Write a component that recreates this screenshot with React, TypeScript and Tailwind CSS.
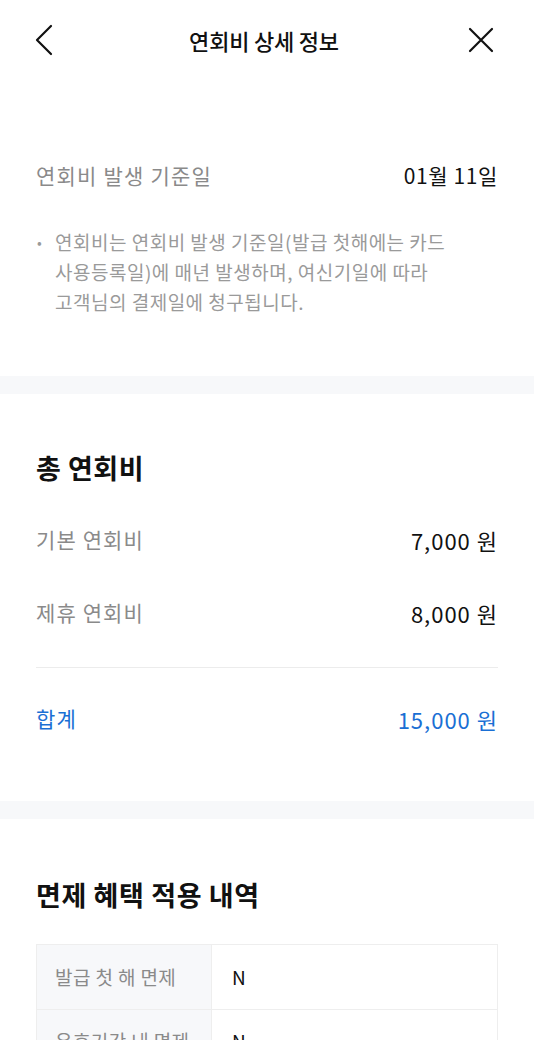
import React from 'react';

const rows = [
  { label: '기본 연회비', value: '7,000 원' },
  { label: '제휴 연회비', value: '8,000 원' },
];

const exemptions = [
  { label: '발급 첫 해 면제', value: 'N' },
  { label: '유효기간 내 면제', value: 'N' },
];

const App: React.FC = () => {
  return (
    <div
      className="w-[534px] min-h-screen bg-white text-[#111] overflow-hidden"
      style={{ fontFamily: '"Noto Sans CJK KR", "Noto Sans", sans-serif' }}
    >
      {/* Header */}
      <header className="h-20 flex items-center justify-between pl-[34px] pr-10">
        <button className="w-8 h-8 flex items-center">
          <svg width="20" height="32" viewBox="0 0 20 32" fill="none">
            <path d="M17 2 L3 16 L17 30" stroke="#111" strokeWidth="2.2" strokeLinecap="round" strokeLinejoin="round" />
          </svg>
        </button>
        <h1 className="text-[22px] font-medium tracking-[-0.2px]">연회비 상세 정보</h1>
        <button className="w-8 h-8 flex items-center justify-end">
          <svg width="26" height="26" viewBox="0 0 26 26" fill="none">
            <path d="M2 2 L24 24 M24 2 L2 24" stroke="#111" strokeWidth="2.2" strokeLinecap="round" />
          </svg>
        </button>
      </header>

      {/* Base date */}
      <section className="px-9 pt-[82px] pb-[59px]">
        <div className="flex items-center justify-between h-7">
          <span className="text-[21px] tracking-[1.2px] text-[#8a8a8a]">연회비 발생 기준일</span>
          <span className="text-[21px] tracking-[0.6px] text-[#111]">01월 11일</span>
        </div>
        <div className="mt-[37px] flex text-[19px] leading-[30px] tracking-[0.5px] text-[#9a9a9a]">
          <span className="w-[19px] shrink-0 text-[14px] pl-[1px]">•</span>
          <p>
            연회비는 연회비 발생 기준일(발급 첫해에는 카드
            <br />
            사용등록일)에 매년 발생하며, 여신기일에 따라
            <br />
            고객님의 결제일에 청구됩니다.
          </p>
        </div>
      </section>

      <div className="h-[18px] bg-[#f7f8fa]" />

      {/* Total fee */}
      <section className="px-9 pt-14 pb-[68px]">
        <h2 className="text-[27px] leading-9 font-bold tracking-[0.5px]">총 연회비</h2>
        {rows.map((r, i) => (
          <div
            key={r.label}
            className={`flex items-center justify-between h-7 ${i === 0 ? 'mt-10' : 'mt-[45px]'}`}
          >
            <span className="text-[21px] tracking-[1.1px] text-[#8a8a8a]">{r.label}</span>
            <span className="text-[22px] tracking-[1px] text-[#111]">{r.value}</span>
          </div>
        ))}
        <div className="mt-10 h-px bg-[#ececec]" />
        <div className="mt-[37px] flex items-center justify-between h-7 text-[#1a6fd4]">
          <span className="text-[21px] tracking-[1.1px]">합계</span>
          <span className="text-[22px] tracking-[1px]">15,000 원</span>
        </div>
      </section>

      <div className="h-[18px] bg-[#f7f8fa]" />

      {/* Exemptions */}
      <section className="px-9 pt-[58px] pb-10">
        <h2 className="text-[27px] leading-9 font-bold tracking-[0.6px]">면제 혜택 적용 내역</h2>
        <div className="mt-[31px] border border-[#eeeeee]">
          {exemptions.map((e, i) => (
            <div key={e.label} className={`flex h-16 ${i > 0 ? 'border-t border-[#eeeeee]' : ''}`}>
              <div className="w-[175px] shrink-0 bg-[#f7f8fa] border-r border-[#eeeeee] flex items-center pl-[18px] text-[19px] tracking-[0.4px] text-[#8a8a8a]">
                {e.label}
              </div>
              <div className="flex items-center pl-5 text-[19px] text-[#111]">{e.value}</div>
            </div>
          ))}
        </div>
      </section>
    </div>
  );
};

export default App;
